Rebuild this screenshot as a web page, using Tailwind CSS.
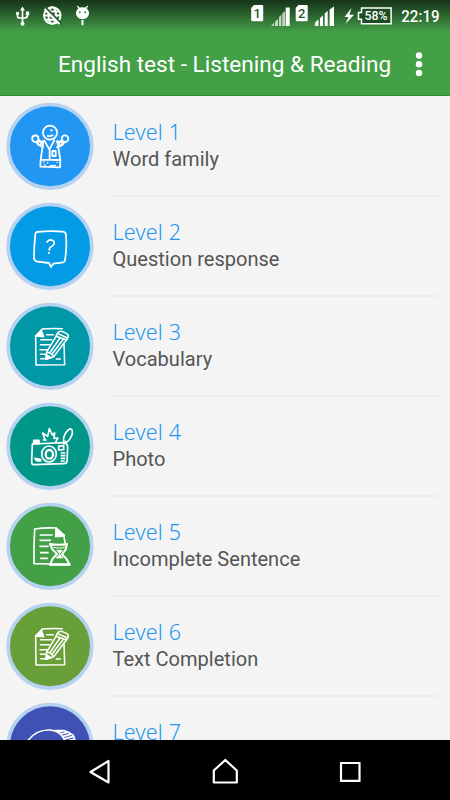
<!DOCTYPE html>
<html lang="en">
<head>
<meta charset="utf-8">
<title>English test</title>
<script src="https://cdn.jsdelivr.net/npm/@tailwindcss/browser@4"></script>
</head>
<body class="w-[450px] h-[800px] overflow-hidden bg-[#f4f4f4] font-['Roboto','Liberation_Sans',sans-serif]">
<svg class="hidden">
  <symbol id="note" viewBox="0 0 300 300">
    <g fill="none" stroke="#fff" stroke-width="4.600" stroke-linecap="round" stroke-linejoin="round">
      <path d="M127 99 Q150 96 187 98 M107 119 L108 207 Q148 206 194 206 L192 143 M107 120 L126 100"/>
      <path d="M108 120 L124 103 L131 122 Z" fill="#fff"/>
      <path d="M140 116h20 M122 131h33 M121 146h27 M120 161h23 M121 175h15 M122 188h12 M169 189h12"/>
      <path d="M172 112 Q178 103 188 107 L199 112 Q208 117 203 126 L200 132 L168 121 Z"/>
      <path d="M170 118 L140 168 L138 190 L161 182 L199 132 M140 168 Q152 169 161 182 M180 126 L149 171 M190 130 L156 175 M174 113 L202 126"/>
      <path d="M139 176 L138 190 L153 185 Z" fill="#fff"/>
    </g>
  </symbol>
</svg>
<div class="flex flex-col w-[450px] h-[800px]">
  <header class="h-24 shrink-0 bg-[#43a047] border-b border-[#28902f]">
    <div class="h-8 bg-linear-to-b from-[#173419] via-[#2c6730] to-[#43a047]">
      <svg class="block w-[450px] h-8" viewBox="0 0 450 32">
        <g fill="none" stroke="#fff" stroke-width="1.700">
          <path d="M22.500 9v15M17.500 12v4q0 2 2 2h5q3 0 3-3v-3"/>
        </g>
        <g fill="#fff">
          <path d="M22.500 6.500l2.500 4h-5z"/><circle cx="22.500" cy="23.800" r="2"/><circle cx="17.600" cy="13.500" r="1.800"/><path d="M25.800 11.500h3.400v3.600h-3.400z"/>
          <path d="M76 12.700a6.600 6.600 0 0 1 13 0v1.100a6.600 6.600 0 0 1-13 0zM81.500 20h2v5.300h-2z"/>
          <path d="M77.200 6l2.800 3M87.800 6l-2.800 3" stroke="#fff" stroke-width="1.100"/>
          <path d="M254 5h8q1.200 0 1.200 1.200v14q0 1-1.200 1h-9.600q-1.200 0-1.200-1.200v-12z"/>
          <path d="M298.500 5h8q1.200 0 1.200 1.200v14q0 1-1.200 1h-9.600q-1.200 0-1.200-1.200v-12z"/>
          <path d="M285.700 7.500h4v18.500h-4zM315.500 22l3-2.500v6.500h-3v-.5h-1zM320 18l3-2.500v10.500h-3zM324.700 13.500l3-2.500v15h-3zM329.600 9.600l4.400-3v19.400h-4.400z"/>
          <path d="M271 26l3-3v3zM275 21.700l3-2.700v7h-3zM279 17l2.400-2.200v11.200h-2.400zM282.300 13.500l2.800-2.500v15h-2.800z" opacity=".7"/>
          <path d="M351.500 8L344.500 17h4l-3 7 8.500-9.200h-4.600z"/>
        </g>
        <circle cx="79.800" cy="12.300" r="1" fill="#3a8540"/><circle cx="85.200" cy="12.300" r="1" fill="#3a8540"/>
        <g fill="none" stroke="#fff" stroke-width="1.900"><circle cx="52.300" cy="15.600" r="8.300"/><ellipse cx="52.300" cy="15.600" rx="3.800" ry="8.300"/><path d="M45 11.500h15M44 15.500h17M45 19.800h15"/></g>
        <path d="M45 7.500l16 16" stroke="#285f2b" stroke-width="2.600"/><path d="M44.500 9l15 15" stroke="#fff" stroke-width="1.900"/>
        <path d="M361.500 8h29.600v15.800h-29.600v-4.500h-3v-6.800h3z" fill="#1e4d22" stroke="#fff" stroke-width="1.500"/>
        <g fill="#fff" class="font-['Roboto',sans-serif]">
          <text x="364.500" y="20.300" font-size="13" font-weight="500" textLength="23" lengthAdjust="spacingAndGlyphs">58%</text>
          <text x="401.300" y="21.600" font-size="15.800" font-weight="500" textLength="38.300" lengthAdjust="spacingAndGlyphs">22:19</text>
          <text x="253.600" y="17.800" font-size="13" font-weight="500" fill="#28592b">1</text>
          <text x="298" y="17.800" font-size="13" font-weight="500" fill="#28592b">2</text>
        </g>
      </svg>
    </div>
    <div class="flex h-16 items-center pl-[58px] pr-[26px] pt-px text-white">
      <h1 class="flex-1 whitespace-nowrap pt-px text-[22.600px] leading-8">English test - Listening &amp; Reading</h1>
      <svg class="w-[10px] h-7" viewBox="0 0 10 28" fill="#fff"><circle cx="5" cy="4.500" r="3.200"/><circle cx="5" cy="13.200" r="3.200"/><circle cx="5" cy="21.900" r="3.200"/></svg>
    </div>
  </header>
  <main class="h-[644px] shrink-0 overflow-hidden">
    <div class="flex h-[100px]">
      <svg class="w-[100px] h-[100px] shrink-0" viewBox="0 0 300 300">
        <circle cx="150" cy="151" r="125.500" fill="#2196f3" stroke="#b5d2f0" stroke-width="11"/>
        <g fill="none" stroke="#fff" stroke-width="5.300" stroke-linecap="round" stroke-linejoin="round">
          <circle cx="150" cy="110" r="21"/><path d="M143 120q8 2 15-2M153 103h3"/>
          <path d="M130 135L122 191L121 212L180 214L181 192L172 135M133 134L148 160L163 133M122 191L181 192M149 160V191"/>
          <path d="M131 138Q119 137 115 130M129 153Q114 148 109 139M170 137Q183 137 187 131M171 153Q191 149 193 138"/>
          <circle cx="106" cy="128" r="9.500"/><circle cx="195" cy="128" r="10"/><circle cx="119" cy="142" r="5"/><circle cx="182" cy="143" r="5"/>
          <path d="M157 165h10v15h-10z" />
          <path d="M132 197v1M143 200v1M134 207h2M151 209h15M171 199h1" stroke-width="4"/>
        </g>
      </svg>
      <div class="mt-px ml-3 h-[100px] w-[326px] border-b-2 border-[#ececec] pt-[20.500px] pl-[0.500px]">
        <div class="font-['Noto_Sans',sans-serif] font-light text-[21.500px] leading-7 tracking-[0.200px] text-[#2196f3]">Level 1</div>
        <div class="text-[20.050px] leading-[26px] text-[#555]">Word family</div>
      </div>
    </div>
    <div class="flex h-[100px]">
      <svg class="w-[100px] h-[100px] shrink-0" viewBox="0 0 300 300">
        <circle cx="150" cy="151" r="125.500" fill="#039be5" stroke="#b5d2f0" stroke-width="11"/>
        <g fill="none" stroke="#fff" stroke-width="5.300" stroke-linecap="round" stroke-linejoin="round">
          <path d="M110 108Q150 104 188 107Q199 108 198 120Q201 155 195 192Q194 200 185 200L160 203L153 213L147 201L113 197Q103 196 102 185Q102 150 106 115Q106 109 110 108Z"/>
          <path d="M141 138Q146 131 154 132Q164 134 162 143Q160 150 152 153Q147 156 148 162M146 171h1"/>
        </g>
      </svg>
      <div class="mt-px ml-3 h-[100px] w-[326px] border-b-2 border-[#ececec] pt-[20.500px] pl-[0.500px]">
        <div class="font-['Noto_Sans',sans-serif] font-light text-[21.500px] leading-7 tracking-[0.200px] text-[#2196f3]">Level 2</div>
        <div class="text-[20.050px] leading-[26px] text-[#555]">Question response</div>
      </div>
    </div>
    <div class="flex h-[100px]">
      <svg class="w-[100px] h-[100px] shrink-0" viewBox="0 0 300 300">
        <circle cx="150" cy="151" r="125.500" fill="#0097a7" stroke="#b5d2f0" stroke-width="11"/>
        <use href="#note"/>
      </svg>
      <div class="mt-px ml-3 h-[100px] w-[326px] border-b-2 border-[#ececec] pt-[20.500px] pl-[0.500px]">
        <div class="font-['Noto_Sans',sans-serif] font-light text-[21.500px] leading-7 tracking-[0.200px] text-[#2196f3]">Level 3</div>
        <div class="text-[20.050px] leading-[26px] text-[#555]">Vocabulary</div>
      </div>
    </div>
    <div class="flex h-[100px]">
      <svg class="w-[100px] h-[100px] shrink-0" viewBox="0 0 300 300">
        <circle cx="150" cy="151" r="125.500" fill="#009688" stroke="#b5d2f0" stroke-width="11"/>
        <g fill="none" stroke="#fff" stroke-width="5" stroke-linecap="round" stroke-linejoin="round">
          <path d="M97 144L191 140Q203 142 203 154L201 196Q201 203 191 203L101 206Q95 206 95 198Z"/>
          <path d="M101 133h16v10h-16zM105 187l17 4 0 4-13-1z" fill="#fff"/>
          <ellipse cx="147" cy="174" rx="22" ry="24"/><ellipse cx="148" cy="175" rx="11" ry="13" stroke-width="7"/>
          <path d="M176 150l15-1v12l-15 1zM184 171h10M184 179h10M184 187h10M184 195h9"/>
          <ellipse cx="204" cy="119" rx="10" ry="22" transform="rotate(27 204 119)"/><path d="M196 136L192 144"/>
          <path d="M135 131L128 111L143 121L148 98L157 117L164 111L162 127L174 126L168 136M130 132h8"/>
        </g>
      </svg>
      <div class="mt-px ml-3 h-[100px] w-[326px] border-b-2 border-[#ececec] pt-[20.500px] pl-[0.500px]">
        <div class="font-['Noto_Sans',sans-serif] font-light text-[21.500px] leading-7 tracking-[0.200px] text-[#2196f3]">Level 4</div>
        <div class="text-[20.050px] leading-[26px] text-[#555]">Photo</div>
      </div>
    </div>
    <div class="flex h-[100px]">
      <svg class="w-[100px] h-[100px] shrink-0" viewBox="0 0 300 300">
        <circle cx="150" cy="151" r="125.500" fill="#43a047" stroke="#b5d2f0" stroke-width="11"/>
        <g fill="none" stroke="#fff" stroke-width="5" stroke-linecap="round" stroke-linejoin="round">
          <path d="M168 96Q135 94 104 99Q101 150 102 203L150 204M192 121L195 141M168 96L193 118"/>
          <path d="M168 97L193 120L167 122Z" fill="#fff"/>
          <path d="M121 117h35M120 133h31M120 151h24M122 170h22M122 187h20"/>
          <path d="M150 144Q177 149 201 144L197 161L186 175L199 188L209 206H150L158 188L171 174L157 160Z" fill="#43a047" stroke-width="6"/>
          <path d="M150 205h58" stroke-width="7"/><path d="M161 155Q178 158 193 155" stroke-width="3"/>
          <path d="M170 163h17l-8 10-8-10M179 175l10 11h-20z" fill="#fff" stroke-width="2"/>
        </g>
      </svg>
      <div class="mt-px ml-3 h-[100px] w-[326px] border-b-2 border-[#ececec] pt-[20.500px] pl-[0.500px]">
        <div class="font-['Noto_Sans',sans-serif] font-light text-[21.500px] leading-7 tracking-[0.200px] text-[#2196f3]">Level 5</div>
        <div class="text-[20.050px] leading-[26px] text-[#555]">Incomplete Sentence</div>
      </div>
    </div>
    <div class="flex h-[100px]">
      <svg class="w-[100px] h-[100px] shrink-0" viewBox="0 0 300 300">
        <circle cx="150" cy="151" r="125.500" fill="#689f38" stroke="#b5d2f0" stroke-width="11"/>
        <use href="#note"/>
      </svg>
      <div class="mt-px ml-3 h-[100px] w-[326px] border-b-2 border-[#ececec] pt-[20.500px] pl-[0.500px]">
        <div class="font-['Noto_Sans',sans-serif] font-light text-[21.500px] leading-7 tracking-[0.200px] text-[#2196f3]">Level 6</div>
        <div class="text-[20.050px] leading-[26px] text-[#555]">Text Completion</div>
      </div>
    </div>
    <div class="flex h-[100px]">
      <svg class="w-[100px] h-[100px] shrink-0" viewBox="0 0 300 300">
        <circle cx="150" cy="151" r="125.500" fill="#3f51b5" stroke="#b5d2f0" stroke-width="11"/>
        <g fill="none" stroke="#fff" stroke-width="5" stroke-linecap="round">
          <path d="M82 136Q108 100 150 102Q176 105 188 122L196 136M165 104L192 104Q207 108 220 118L226 136M176 109L188 105M183 114L201 109M190 121L211 115M195 128L218 122M197 136L222 130"/>
        </g>
      </svg>
      <div class="mt-px ml-3 h-[100px] w-[326px] pt-[20.500px] pl-[0.500px]">
        <div class="font-['Noto_Sans',sans-serif] font-light text-[21.500px] leading-7 tracking-[0.200px] text-[#2196f3]">Level 7</div>
      </div>
    </div>
  </main>
  <nav class="flex h-[60px] shrink-0 items-center justify-between bg-black px-[87px]">
    <svg class="w-6 h-7" viewBox="0 0 24 28" fill="none" stroke="#fff" stroke-width="2.200"><path d="M21.500 5v21.500L3.500 16z" stroke-linejoin="round"/></svg>
    <svg class="w-7 h-7" viewBox="0 0 28 28" fill="none" stroke="#fff" stroke-width="2.200"><path d="M15.300 4L26.800 14.500V26.500H3.800V14.500z" stroke-linejoin="round"/></svg>
    <svg class="w-[26px] h-7" viewBox="0 0 26 28" fill="none" stroke="#fff" stroke-width="2.200"><path d="M4 7h18.500v17.800H4z"/></svg>
  </nav>
</div>
</body>
</html>
